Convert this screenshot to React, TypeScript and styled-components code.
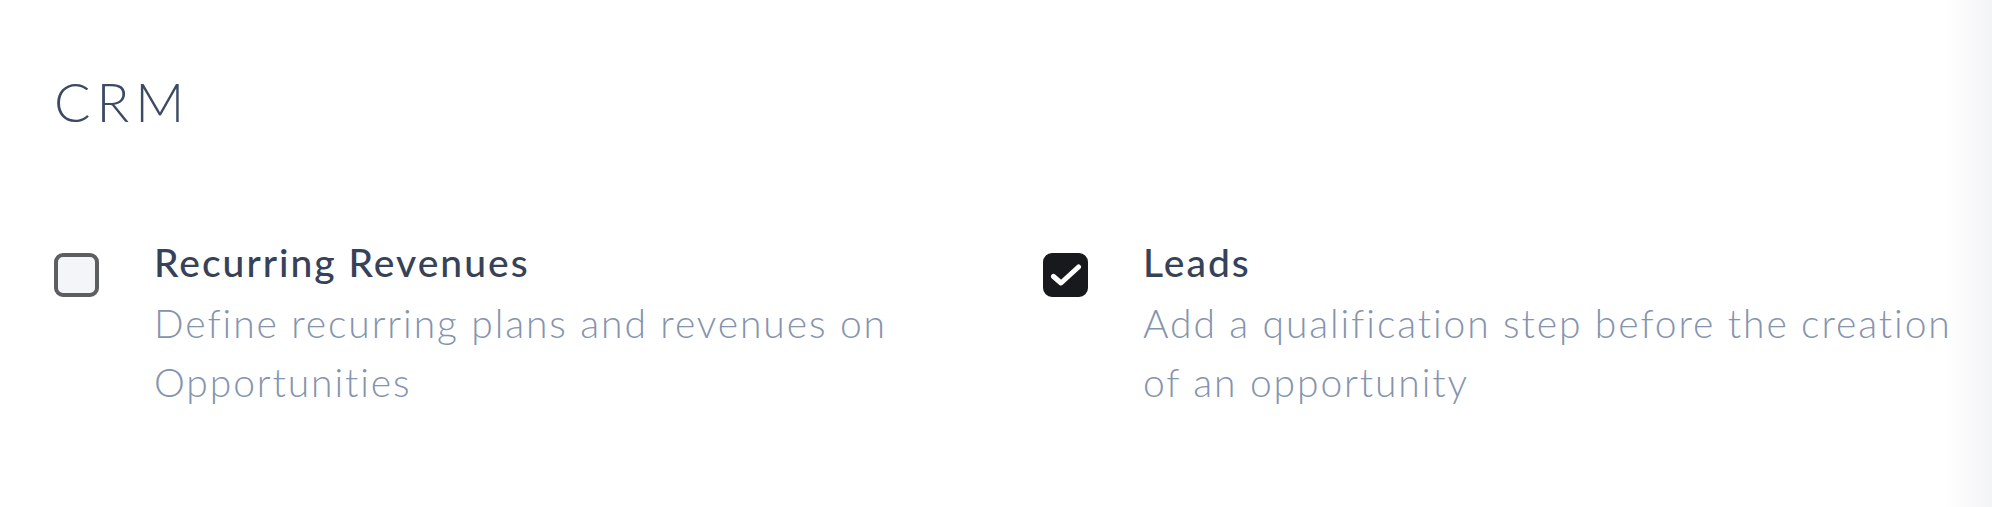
import React from "react";
import styled, { createGlobalStyle } from "styled-components";

const Global = createGlobalStyle`
  html, body { margin: 0; padding: 0; background: #ffffff; }
  body { font-family: Lato, "Liberation Sans", sans-serif; }
  * { box-sizing: border-box; }
`;

const Page = styled.div`
  width: 1992px;
  height: 507px;
  padding: 0 0 0 54px;
  background: linear-gradient(to right, #ffffff 0, #ffffff calc(100% - 48px), #f3f4f5 100%);
  overflow: hidden;
`;

const Heading = styled.h2`
  margin: 0;
  padding-top: 70px;
  font-family: Lato, "Liberation Sans", sans-serif;
  font-weight: 300;
  font-size: 54px;
  line-height: 64px;
  letter-spacing: 6px;
  color: #3c4a63;
`;

const Grid = styled.div`
  display: grid;
  grid-template-columns: 989px 1fr;
  margin-top: 101px;
`;

const Setting = styled.div`
  display: flex;
  align-items: flex-start;
`;

const BoxCol = styled.div`
  width: 100px;
  flex: none;
  padding-top: 18px;
`;

const Box = styled.div<{ $checked?: boolean }>`
  width: 45px;
  height: 44px;
  border-radius: 9px;
  border: 4px solid ${(p) => (p.$checked ? "#17191c" : "#5d5e60")};
  background: ${(p) => (p.$checked ? "#17191c" : "#f4f5f8")};
  display: flex;
  align-items: center;
  justify-content: center;
`;

const Texts = styled.div`
  display: flex;
  flex-direction: column;
  flex: none;
  width: 832px;
`;

const Title = styled.div`
  font-size: 39px;
  font-weight: 500;
  line-height: 54px;
  letter-spacing: 2px;
  color: #364257;
`;

const Desc = styled.div`
  margin-top: 5px;
  font-size: 39px;
  font-weight: 300;
  line-height: 59px;
  letter-spacing: 1.9px;
  color: #8594ae;
`;

const Check = () => (
  <svg width="32" height="24" viewBox="0 0 32 24" fill="none">
    <path d="M3.5 13.5 L11 20 L28.5 4" stroke="#ffffff" strokeWidth="5" strokeLinecap="round" strokeLinejoin="round" />
  </svg>
);

const settings = [
  { title: "Recurring Revenues", desc: "Define recurring plans and revenues on Opportunities", checked: false },
  { title: "Leads", desc: "Add a qualification step before the creation of an opportunity", checked: true },
];

export default function App() {
  return (
    <>
      <Global />
      <Page>
        <Heading>CRM</Heading>
        <Grid>
          {settings.map((s) => (
            <Setting key={s.title}>
              <BoxCol>
                <Box $checked={s.checked}>{s.checked && <Check />}</Box>
              </BoxCol>
              <Texts>
                <Title>{s.title}</Title>
                <Desc>{s.desc}</Desc>
              </Texts>
            </Setting>
          ))}
        </Grid>
      </Page>
    </>
  );
}
